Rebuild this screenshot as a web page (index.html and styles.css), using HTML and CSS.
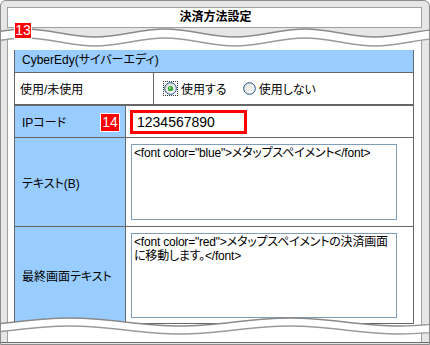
FILE: index.html
```html
<!DOCTYPE html>
<html lang="ja">
<head>
<meta charset="utf-8">
<link rel="stylesheet" href="styles.css">
</head>
<body>
<div class="frame">
  <div class="title">決済方法設定</div>
  <div class="panel">
    <div class="tbl">
      <div class="head">CyberEdy(サイバーエディ)</div>
      <div class="row row-use">
        <div class="cell lbl-white">使用/未使用</div>
        <div class="cell radios">
          <label class="radio on">
            <span class="focus">
              <svg width="13" height="13" viewBox="0 0 13 13"><defs><linearGradient id="rg1" x1="0" y1="0" x2="1" y2="1"><stop offset="0" stop-color="#dcdcd6"/><stop offset="1" stop-color="#ffffff"/></linearGradient></defs><circle cx="6.5" cy="6.5" r="5.8" fill="url(#rg1)" stroke="#1c5180" stroke-width="1"/><circle cx="6.5" cy="6.5" r="2.6" fill="#2fa52f"/><circle cx="6" cy="6" r="1" fill="#9be39b"/></svg>
            </span>
            <span>使用する</span>
          </label>
          <label class="radio">
            <svg width="13" height="13" viewBox="0 0 13 13"><defs><linearGradient id="rg2" x1="0" y1="0" x2="1" y2="1"><stop offset="0" stop-color="#dcdcd6"/><stop offset="1" stop-color="#ffffff"/></linearGradient></defs><circle cx="6.5" cy="6.5" r="5.8" fill="url(#rg2)" stroke="#1c5180" stroke-width="1"/></svg>
            <span>使用しない</span>
          </label>
        </div>
      </div>
    </div>
    <div class="tbl tbl2">
      <div class="row row-ip">
        <div class="cell lbl">IPコード<span class="badge b14">14</span></div>
        <div class="cell val"><div class="ipbox">1234567890</div></div>
      </div>
      <div class="row row-text">
        <div class="cell lbl">テキスト(B)</div>
        <div class="cell val top"><div class="ta ta1">&lt;font color="blue"&gt;メタップスペイメント&lt;/font&gt;</div></div>
      </div>
      <div class="row row-final">
        <div class="cell lbl">最終画面テキスト</div>
        <div class="cell val top"><div class="ta ta2">&lt;font color="red"&gt;メタップスペイメントの決済画面<br>に移動します。&lt;/font&gt;</div></div>
      </div>
    </div>
  </div>

  <svg class="wave wave-top" width="430" height="24" viewBox="0 0 430 24">
    <defs>
      <clipPath id="belowT"><path d="M-45,20 C-19.5,20 -0.5,12 25,12 S69.5,20 95,20 S139.5,12 165,12 S209.5,20 235,20 S279.5,12 305,12 S349.5,20 375,20 S419.5,12 445,12 S489.5,20 515,20 L515,30 L-45,30 Z"/></clipPath>
    </defs>
    <path d="M-45,11 C-19.5,11 -0.5,3 25,3 S69.5,11 95,11 S139.5,3 165,3 S209.5,11 235,11 S279.5,3 305,3 S349.5,11 375,11 S419.5,3 445,3 S489.5,11 515,11 L515,30 L-45,30 Z" fill="#fff"/>
    <g clip-path="url(#belowT)">
      <rect x="0" y="0" width="430" height="24" fill="#e6e6e6"/>
      <rect x="0" y="0" width="1" height="24" fill="#8c8c8c"/>
      <rect x="429" y="0" width="1" height="24" fill="#8c8c8c"/>
      <rect x="7" y="0" width="415" height="24" fill="#a0a0a0"/>
      <rect x="8" y="0" width="413" height="24" fill="#fff"/>
    </g>
    <path d="M-45,11 C-19.5,11 -0.5,3 25,3 S69.5,11 95,11 S139.5,3 165,3 S209.5,11 235,11 S279.5,3 305,3 S349.5,11 375,11 S419.5,3 445,3 S489.5,11 515,11" fill="none" stroke="#8a8a8a" stroke-width="1.4"/>
    <path d="M-45,20 C-19.5,20 -0.5,12 25,12 S69.5,20 95,20 S139.5,12 165,12 S209.5,20 235,20 S279.5,12 305,12 S349.5,20 375,20 S419.5,12 445,12 S489.5,20 515,20" fill="none" stroke="#9a9a9a" stroke-width="1.4"/>
  </svg>

  <svg class="wave wave-bot" width="430" height="32" viewBox="0 0 430 32">
    <defs>
      <clipPath id="belowB"><path d="M-40,21 C0,21 30,13 70,13 S140,21 180,21 S250,13 290,13 S360,21 400,21 S470,13 510,13 L510,40 L-40,40 Z"/></clipPath>
    </defs>
    <path d="M-40,13 C0,13 30,5 70,5 S140,13 180,13 S250,5 290,5 S360,13 400,13 S470,5 510,5 L510,40 L-40,40 Z" fill="#fff"/>
    <g clip-path="url(#belowB)">
      <rect x="0" y="0" width="430" height="32" fill="#e6e6e6"/>
      <rect x="0" y="0" width="1" height="32" fill="#8c8c8c"/>
      <rect x="429" y="0" width="1" height="32" fill="#8c8c8c"/>
      <rect x="7" y="0" width="415" height="32" fill="#a0a0a0"/>
      <rect x="8" y="0" width="413" height="32" fill="#fff"/>
      <rect x="0" y="29" width="430" height="1" fill="#6e6e6e"/>
      <rect x="0" y="30" width="430" height="2" fill="#e6e6e6"/>
    </g>
    <path d="M-40,13 C0,13 30,5 70,5 S140,13 180,13 S250,5 290,5 S360,13 400,13 S470,5 510,5" fill="none" stroke="#8a8a8a" stroke-width="1.4"/>
    <path d="M-40,21 C0,21 30,13 70,13 S140,21 180,21 S250,13 290,13 S360,21 400,21 S470,13 510,13" fill="none" stroke="#9a9a9a" stroke-width="1.4"/>
  </svg>

  <span class="badge b13">13</span>
</div>
</body>
</html>
```

FILE: styles.css
```css
* { box-sizing: border-box; }
html, body { margin: 0; padding: 0; background: #fff; }
body {
  font-family: "Liberation Sans", "Noto Sans CJK JP", sans-serif;
  font-size: 12px;
  color: #000;
  font-feature-settings: "palt";
}
.frame {
  position: relative;
  width: 430px;
  height: 345px;
  background: #e6e6e6;
  border: 1px solid #8c8c8c;
  border-radius: 6px 6px 0 0;
  padding: 6px 7px 0 6px;
  display: flex;
  flex-direction: column;
  overflow: hidden;
}
.title {
  height: 21px;
  flex: none;
  background: #fff;
  border: 1px solid #a0a0a0;
  text-align: center;
  font-weight: bold;
  font-size: 12px;
  line-height: 19px;
  padding-left: 2px;
  font-feature-settings: normal;
}
.panel {
  flex: 1;
  margin-top: 10px;
  background: #fff;
  border: 1px solid #a0a0a0;
  border-bottom: none;
  padding: 9px 7px 0 6px;
}
.tbl {
  border: 1px solid #666;
}
.head {
  height: 24px;
  background: #99ccff;
  border-bottom: 1px solid #666;
  padding-left: 7px;
  line-height: 23px;
}
.row {
  display: grid;
}
.cell {
  display: flex;
  align-items: center;
}
.row-use {
  grid-template-columns: 139px 1fr;
  height: 31px;
}
.lbl-white {
  border-right: 1px solid #666;
  padding-left: 5px;
}
.radios {
  padding-left: 10px;
}
.radio {
  display: flex;
  align-items: center;
  gap: 3px;
}
.radio.on { margin-right: 16px; gap: 4px; }
.radio svg { display: block; }
.focus {
  display: block;
  outline: 1px dotted #333;
  outline-offset: 0;
}
.row-ip, .row-text, .row-final {
  grid-template-columns: 111px 1fr;
}
.row-ip { height: 32px; border-bottom: 1px solid #666; }
.row-text { height: 89px; border-bottom: 1px solid #666; }
.row-final { height: 96px; }
.lbl {
  position: relative;
  background: #99ccff;
  border-right: 1px solid #666;
  padding-left: 7px;
}
.val { padding-left: 4px; }
.val.top { align-items: flex-start; padding-top: 6px; padding-left: 5px; }
.ipbox {
  width: 117px;
  height: 24px;
  border: 3px solid #f00;
  padding-left: 4px;
  font-size: 14px;
  line-height: 18px;
}
.ta {
  width: 266px;
  border: 1px solid #7f9db9;
  padding: 1px 2px;
  line-height: 14px;
  font-size: 12px;
  letter-spacing: -0.2px;
  white-space: nowrap;
}
.ta1 { height: 76px; }
.ta2 { height: 85px; }
.wave {
  position: absolute;
  left: -1px;
  display: block;
}
.wave-top { top: 25px; }
.wave-bot { top: 312px; }
.badge {
  position: absolute;
  background: #f00;
  color: #fff;
  border: 1px solid #fff;
  font-family: "Liberation Sans", sans-serif;
  font-size: 14px;
  text-align: center;
}
.b13 { left: 13px; top: 21px; width: 18px; height: 17px; line-height: 15px; }
.b14 { right: 5px; top: 7px; width: 20px; height: 19px; line-height: 17px; }
```
